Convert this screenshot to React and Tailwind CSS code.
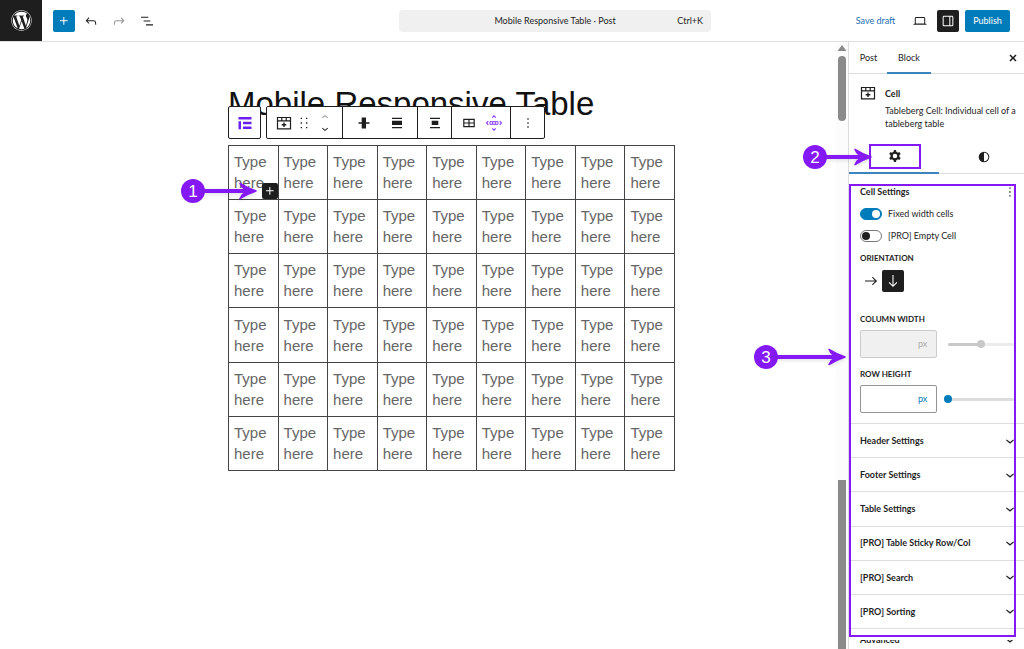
import { useState } from "react";
import { FaWordpress } from "react-icons/fa";

const icons = {
  plus: "M11 12.5V17.5H12.5V12.5H17.5V11H12.5V6H11V11H6V12.5H11Z",
  undo: "M18.3 11.7c-.6-.6-1.4-.9-2.3-.9H6.7l2.9-3.3-1.1-1-4.5 5L8.5 16l1-1-2.7-2.7H16c.5 0 .9.2 1.3.5 1 1 1 3.4 1 4.5v.3h1.5v-.2c0-1.5 0-4.3-1.5-5.7z",
  redo: "M15.6 6.5l-1.1 1 2.9 3.3H8c-.9 0-1.7.3-2.3.9-1.4 1.5-1.4 4.2-1.4 5.6v.2h1.5v-.3c0-1.1 0-3.5 1-4.5.3-.3.7-.5 1.3-.5h9.2L14.5 15l1.1 1.1 4.6-4.6-4.6-5z",
  listView: "M3 5.5h11v1.7H3V5.5Zm4 5.6h10v1.7H7v-1.7ZM21 17H10.500v1.7H21V17Z",
  laptop: "M20.500 16h-.7V8c0-1.100-.9-2-2-2H6.200c-1.100 0-2 .9-2 2v8h-.7c-.8 0-1.500.7-1.500 1.500h20c0-.8-.7-1.500-1.500-1.500zM5.700 8c0-.3.2-.5.5-.5h11.600c.3 0 .5.2.5.5v7.600H5.700V8z",
  drawer: "M18 4H6c-1.100 0-2 .9-2 2v12c0 1.100.9 2 2 2h12c1.100 0 2-.9 2-2V6c0-1.100-.9-2-2-2zm-4 14.500H6c-.3 0-.5-.2-.5-.5V6c0-.3.2-.5.5-.5h8v13zm4.500-.5c0 .3-.2.5-.5.5h-2.500v-13H18c.3 0 .5.2.5.5v12z",
  close: "M12 13.600l3.700 3.700 1.600-1.600L13.600 12l3.700-3.700-1.600-1.600L12 10.400 8.300 6.700 6.700 8.300l3.700 3.700-3.700 3.700 1.600 1.600L12 13.600z",
  half: "M20 12a8 8 0 1 1-16 0 8 8 0 0 1 16 0Zm-1.500 0a6.500 6.500 0 0 1-6.500 6.500v-13a6.500 6.500 0 0 1 6.500 6.500Z",
  more: "M13 19h-2v-2h2v2zm0-6h-2v-2h2v2zm0-6h-2V5h2v2z",
  moreBold: "M13.200 21h-2.600v-2.600h2.600v2.600zm0-7.700h-2.600v-2.600h2.600v2.600zm0-7.700h-2.600V3h2.600v2.600z",
  drag: "M7 6h2V4H7v2zm0 7h2v-2H7v2zm0 7h2v-2H7v2zM15 4v2h2V4h-2zm0 9h2v-2h-2v2zm0 7h2v-2h-2v2z",
  down: "M18 11L12 16l-6-5 1.100-1.400L12 13.600l4.900-4L18 11z",
  up: "M6 13l6-5 6 5-1.100 1.400L12 10.400l-4.900 4L6 13z",
  arrowRight: "m14.500 5.500-1 1.100 4.400 4.600H3v1.600h14.900l-4.400 4.600 1 1.100 6.600-6.500z",
  arrowDown: "m18.500 14.500-1.100-1-4.600 4.400V3h-1.600v14.900l-4.600-4.400-1.100 1 6.500 6.600z",
  cog: "M10.289 4.836A1 1 0 0111.275 4h1.306a1 1 0 01.987.836l.244 1.466c.787.26 1.503.679 2.108 1.218l1.393-.522a1 1 0 011.216.437l.653 1.130a1 1 0 01-.23 1.273l-1.148.944a6.025 6.025 0 010 2.435l1.149.946a1 1 0 01.23 1.272l-.653 1.130a1 1 0 01-1.216.437l-1.394-.522c-.605.54-1.320.958-2.108 1.218l-.244 1.466a1 1 0 01-.987.836h-1.306a1 1 0 01-.986-.836l-.244-1.466a5.995 5.995 0 01-2.108-1.218l-1.394.522a1 1 0 01-1.217-.436l-.653-1.131a1 1 0 01.23-1.272l1.149-.946a6.026 6.026 0 010-2.435l-1.148-.944a1 1 0 01-.23-1.272l.653-1.131a1 1 0 011.217-.437l1.393.522a5.994 5.994 0 012.108-1.218l.244-1.466zM14.929 12a3 3 0 11-6 0 3 3 0 016 0z",
};

function Icon({ name, className = "size-4" }) {
  return (
    <svg viewBox="0 0 24 24" fill="currentColor" className={className} aria-hidden="true">
      <path fillRule="evenodd" clipRule="evenodd" d={icons[name]} />
    </svg>
  );
}

function CellIcon() {
  return (
    <svg viewBox="0 0 16 16" fill="none" stroke="currentColor" className="size-4" aria-hidden="true">
      <path d="M1.500 2.500h13v11.300h-13zM1.500 5.800h13M5.800 2.500v3.300M10.200 2.500v3.300" strokeWidth="1.200" />
      <path d="M8 7.500v4.600M5.700 9.800h4.600" strokeWidth="1.400" />
    </svg>
  );
}

// Number badge with an arrow pointing right, used for the guide steps
function Callout({ number, length, className }) {
  const tip = length - 1;
  return (
    <div className={`pointer-events-none absolute z-20 flex items-center ${className}`}>
      <span className="flex size-6 items-center justify-center rounded-full bg-[#8519f5] font-['Liberation_Sans',sans-serif] text-[17px] leading-none text-white">
        {number}
      </span>
      <svg width={length} height="20" fill="none" stroke="#8519f5" className="-ml-px drop-shadow-sm" aria-hidden="true">
        <path d={`M0 10H${tip - 5}`} strokeWidth="4" />
        <path
          d={`M${tip - 16} 2.500Q${tip - 9} 7 ${tip} 10Q${tip - 9} 13 ${tip - 16} 17.500L${tip - 14} 14L${tip - 9} 10L${tip - 14} 6Z`}
          fill="#8519f5"
          strokeWidth="1.500"
          strokeLinejoin="round"
        />
      </svg>
    </div>
  );
}

function TopBar() {
  return (
    <header className="flex h-[42px] shrink-0 items-center border-b border-[#e0e0e0]">
      <a href="#" aria-label="View posts" className="flex h-full w-[42px] items-center justify-center bg-[#1e1e1e] text-white">
        <FaWordpress className="size-[21px]" />
      </a>
      <div className="flex items-center gap-3 pl-[11px]">
        <button aria-label="Block inserter" className="-mr-1 flex h-[22px] w-[22px] items-center justify-center rounded-xs bg-[#007cba] text-white">
          <Icon name="plus" />
        </button>
        <button aria-label="Undo"><Icon name="undo" /></button>
        <button aria-label="Redo" className="text-[#949494]"><Icon name="redo" /></button>
        <button aria-label="Document overview"><Icon name="listView" /></button>
      </div>
      <button className="ml-auto mr-36 grid h-[22px] w-[312px] grid-cols-[1fr_auto_1fr] items-center rounded-sm bg-[#f0f0f0] px-2">
        <span className="col-start-2">Mobile Responsive Table · Post</span>
        <span className="justify-self-end">Ctrl+K</span>
      </button>
      <div className="flex items-center pr-[14px]">
        <button className="w-[41px] whitespace-nowrap text-[#2271b1]">Save draft</button>
        <button aria-label="Preview" className="ml-4"><Icon name="laptop" /></button>
        <button aria-label="Settings" className="ml-[9px] flex h-[22px] w-[22px] items-center justify-center rounded-xs bg-[#1e1e1e] text-white">
          <Icon name="drawer" />
        </button>
        <button className="ml-[6px] h-[22px] w-[45px] rounded-xs bg-[#007cba] text-white">Publish</button>
      </div>
    </header>
  );
}

function BlockToolbar() {
  const group = "flex items-center border-r border-[#1e1e1e] last:border-r-0";
  return (
    <div className="absolute bottom-full left-0 z-10 mb-[6px] flex h-[33px] gap-[5px]">
      <button aria-label="Select table" className="flex w-[33px] items-center justify-center rounded-xs border border-[#1e1e1e] bg-white text-[#6a1ff0]">
        <svg viewBox="0 0 16 16" fill="currentColor" className="size-4" aria-hidden="true">
          <path d="M1.500 2h13v2.500h-13zM1.500 6.300h2.500v8h-2.500zM6 6.800h8.500v2.400H6zM6 11.500h8.500v2.500H6z" />
        </svg>
      </button>
      <div role="toolbar" aria-label="Block tools" className="flex rounded-xs border border-[#1e1e1e] bg-white">
        <div className={`${group} w-[76px] gap-1 pl-[9px]`}>
          <button aria-label="Cell"><CellIcon /></button>
          <button aria-label="Drag"><Icon name="drag" /></button>
          <div className="ml-px flex flex-col">
            <button aria-label="Move up" className="text-[#949494]"><Icon name="up" className="h-3 w-4" /></button>
            <button aria-label="Move down"><Icon name="down" className="h-3 w-4" /></button>
          </div>
        </div>
        <div className={`${group} w-[75px] justify-center gap-[17px]`}>
          <button aria-label="Align column">
            <svg viewBox="0 0 16 16" fill="currentColor" className="size-4" aria-hidden="true">
              <path d="M2.500 7.300h11v1.500h-11zM5.700 2.500h4.300v11h-4.300z" />
            </svg>
          </button>
          <button aria-label="Align row">
            <svg viewBox="0 0 16 16" fill="currentColor" className="size-4" aria-hidden="true">
              <path d="M3 2.700h10v1.300H3zM3 5.800h10v4.300H3zM3 12h10v1.300H3z" />
            </svg>
          </button>
        </div>
        <div className={`${group} w-[34px] justify-center`}>
          <button aria-label="Vertical alignment">
            <svg viewBox="0 0 16 16" fill="currentColor" className="size-4" aria-hidden="true">
              <path d="M3 2.700h10v1.300H3zM4.700 5.800h6.600v4.300H4.700zM3 12h10v1.300H3z" />
            </svg>
          </button>
        </div>
        <div className={`${group} w-[59px] justify-center gap-[9px]`}>
          <button aria-label="Edit table">
            <svg viewBox="0 0 16 16" fill="none" stroke="currentColor" strokeWidth="1.200" className="size-4" aria-hidden="true">
              <path d="M2.800 4.300h10.400v7.400H2.800zM2.800 8h10.400M8 4.300v7.400" />
            </svg>
          </button>
          <button aria-label="Add rows or columns" className="text-[#8a3ffc]">
            <svg viewBox="0 0 16 16" fill="none" stroke="currentColor" className="size-4" aria-hidden="true">
              <path d="M6.200 2.600L8 .9l1.800 1.700M6.200 13.400L8 15.100l1.800-1.700M2.300 6.200L.6 8l1.700 1.800M13.700 6.200L15.400 8l-1.700 1.800" strokeWidth="1.200" />
              <path d="M4 6.700h8v2.600H4zM6.700 6.700v2.600M9.300 6.700v2.600" />
            </svg>
          </button>
        </div>
        <div className={`${group} w-[33px] justify-center`}>
          <button aria-label="Options"><Icon name="more" /></button>
        </div>
      </div>
    </div>
  );
}

function Canvas() {
  const rows = Array.from({ length: 6 });
  const cols = Array.from({ length: 9 });

  return (
    <main className="relative min-w-0 flex-1 overflow-hidden pl-57 pt-[42px] font-['Liberation_Sans',Arial,sans-serif]">
      <h1 className="text-[33px] leading-10 text-[#111]">Mobile Responsive Table</h1>
      <div className="relative mt-[21px] w-[447px]">
        <BlockToolbar />
        <table className="h-[326px] w-full table-fixed border-collapse text-[15px] leading-[21px] text-[#666]">
          <tbody>
            {rows.map((_, r) => (
              <tr key={r}>
                {cols.map((_, c) => (
                  <td key={c} className="relative border border-[#444] px-[5px] pb-[6px] pt-[5px]">
                    Type here
                    {r === 0 && c === 0 && (
                      <button aria-label="Add block" className="absolute bottom-0 right-0 flex size-4 items-center justify-center rounded-xs bg-[#1e1e1e] text-white">
                        <Icon name="plus" />
                      </button>
                    )}
                  </td>
                ))}
              </tr>
            ))}
          </tbody>
        </table>
      </div>
      <Callout number={1} length={53} className="left-[181px] top-[137px]" />
    </main>
  );
}

function Scrollbar() {
  return (
    <div aria-hidden="true" className="flex w-3 shrink-0 flex-col items-center bg-[#fcfcfc] text-[#8a8a8a]">
      <svg viewBox="0 0 10 6" fill="currentColor" className="mt-[3px] h-[6px] w-[10px]">
        <path d="M5 0l4.500 6h-9z" />
      </svg>
      <span className="mt-[5px] h-[65px] w-2 rounded-full bg-current" />
      <span className="mt-[359px] w-2 flex-1 bg-current" />
    </div>
  );
}

function Toggle({ label, checked, onChange }) {
  return (
    <label className="flex h-[22px] items-center gap-[6px]">
      <input
        type="checkbox"
        role="switch"
        checked={checked}
        onChange={(e) => onChange(e.target.checked)}
        className="relative h-3 w-[22px] appearance-none rounded-full border border-[#777] bg-white before:absolute before:left-px before:top-px before:size-2 before:rounded-full before:bg-[#1e1e1e] checked:border-[#007cba] checked:bg-[#007cba] checked:before:left-[11px] checked:before:bg-white"
      />
      {label}
    </label>
  );
}

function SizeControl({ id, label, disabled, defaultValue, sliderStyle, boxStyle }) {
  return (
    <div>
      <label htmlFor={id} className="block text-[8px] font-bold uppercase leading-[10px]">{label}</label>
      <div className="mt-[6px] flex items-center">
        <div className={`flex h-7 w-[77px] shrink-0 items-center rounded-xs border pr-2 ${boxStyle}`}>
          <input id={id} type="text" disabled={disabled} className="w-full min-w-0 bg-transparent pl-2 outline-none" />
          <select aria-label={`${label} unit`} disabled={disabled} className="appearance-none bg-transparent opacity-100">
            <option>px</option>
          </select>
        </div>
        <input
          type="range"
          aria-label={`${label} slider`}
          disabled={disabled}
          defaultValue={defaultValue}
          className={`h-[3px] min-w-0 flex-1 appearance-none rounded-full [&::-webkit-slider-thumb]:size-2 [&::-webkit-slider-thumb]:appearance-none [&::-webkit-slider-thumb]:rounded-full ${sliderStyle}`}
        />
      </div>
    </div>
  );
}

const panels = [
  "Header Settings",
  "Footer Settings",
  "Table Settings",
  "[PRO] Table Sticky Row/Col",
  "[PRO] Search",
  "[PRO] Sorting",
];

function Sidebar() {
  const [fixed, setFixed] = useState(true);
  const [empty, setEmpty] = useState(false);

  return (
    <aside className="relative flex w-44 shrink-0 flex-col border-l border-[#ddd] bg-white">
      <div className="flex h-8 shrink-0 border-b border-[#ddd] pl-px">
        <button className="w-[37px] text-center">Post</button>
        <button className="-mb-px w-11 border-b-2 border-[#3c84bd] pt-px text-center">Block</button>
        <button aria-label="Close settings" className="ml-auto mr-[3px]"><Icon name="close" /></button>
      </div>

      <div className="flex gap-[9px] pl-[11px] pt-[11px]">
        <CellIcon />
        <div className="min-w-0 pt-[2px] leading-[13px]">
          <h2 className="font-bold">Cell</h2>
          <p className="mt-1 whitespace-nowrap">Tableberg Cell: Individual cell of a<br />tableberg table</p>
        </div>
      </div>

      <div className="mt-[10px] flex h-[34px] shrink-0 border-b border-[#ddd]">
        <button aria-label="Settings" className="-mb-px flex w-[90px] items-center justify-center border-b-2 border-[#3c84bd] pl-[2px]">
          <span className="flex h-[25px] w-[52px] items-center justify-center border-2 border-[#8519f5]">
            <Icon name="cog" className="size-[18px]" />
          </span>
        </button>
        <button aria-label="Styles" className="flex flex-1 items-center justify-center pl-1"><Icon name="half" /></button>
      </div>

      <section className="flex flex-col pl-[11px] pr-[10px] pt-2">
        <div className="flex h-5 items-center justify-between pb-px">
          <h3 className="font-bold">Cell Settings</h3>
          <button aria-label="Cell settings options" className="-mr-[2px]"><Icon name="moreBold" className="size-3" /></button>
        </div>
        <div className="pt-px">
          <Toggle label="Fixed width cells" checked={fixed} onChange={setFixed} />
          <Toggle label="[PRO] Empty Cell" checked={empty} onChange={setEmpty} />
        </div>
        <p className="mt-[6px] text-[8px] font-bold uppercase leading-[10px]">Orientation</p>
        <div className="mt-[7px] flex">
          <button aria-label="Horizontal" className="flex size-[22px] items-center justify-center"><Icon name="arrowRight" /></button>
          <button aria-label="Vertical" className="flex size-[22px] items-center justify-center rounded-xs bg-[#1e1e1e] text-white"><Icon name="arrowDown" /></button>
        </div>
        <div className="mt-[22px] flex flex-col gap-[11px]">
          <SizeControl
            id="col-width"
            label="Column width"
            disabled
            defaultValue={50}
            boxStyle="border-[#ccc] bg-[#f0f0f0] text-[#aaa]"
            sliderStyle="ml-[11px] bg-linear-to-r from-[#c8c8c8] from-50% to-[#ececec] to-50% [&::-webkit-slider-thumb]:bg-[#c8c8c8]"
          />
          <SizeControl
            id="row-height"
            label="Row height"
            defaultValue={0}
            boxStyle="border-[#949494] text-[#007cba]"
            sliderStyle="ml-[7px] bg-[#ddd] [&::-webkit-slider-thumb]:bg-[#007cba]"
          />
        </div>
      </section>

      <div className="mt-[10px] flex h-[205px] shrink-0 flex-col">
        {panels.map((name) => (
          <button key={name} aria-expanded="false" className="flex w-full flex-1 items-center justify-between border-t border-[#ddd] pl-[11px] pr-[6px] font-bold">
            {name}
            <Icon name="down" />
          </button>
        ))}
      </div>
      <div className="relative shrink-0 border-t border-[#ddd]">
        <button aria-expanded="false" className="flex h-[22px] w-full items-center justify-between pl-[11px] pr-[6px] font-bold">
          Advanced
          <Icon name="down" />
        </button>
        <span className="absolute inset-x-0 top-0 h-[11px] bg-white" />
      </div>

      <div className="pointer-events-none absolute left-0 top-[142px] h-[453px] w-[167px] border-2 border-[#8519f5]" />
      <Callout number={2} length={46} className="-left-[46px] top-[103px]" />
      <Callout number={3} length={69} className="-left-[95px] top-[303px]" />
    </aside>
  );
}

export default function App() {
  return (
    <div className="flex h-screen flex-col overflow-hidden bg-white font-[Lato,'Segoe_UI',sans-serif] text-[9px] text-[#1e1e1e]">
      <TopBar />
      <div className="flex min-h-0 flex-1">
        <Canvas />
        <Scrollbar />
        <Sidebar />
      </div>
    </div>
  );
}
